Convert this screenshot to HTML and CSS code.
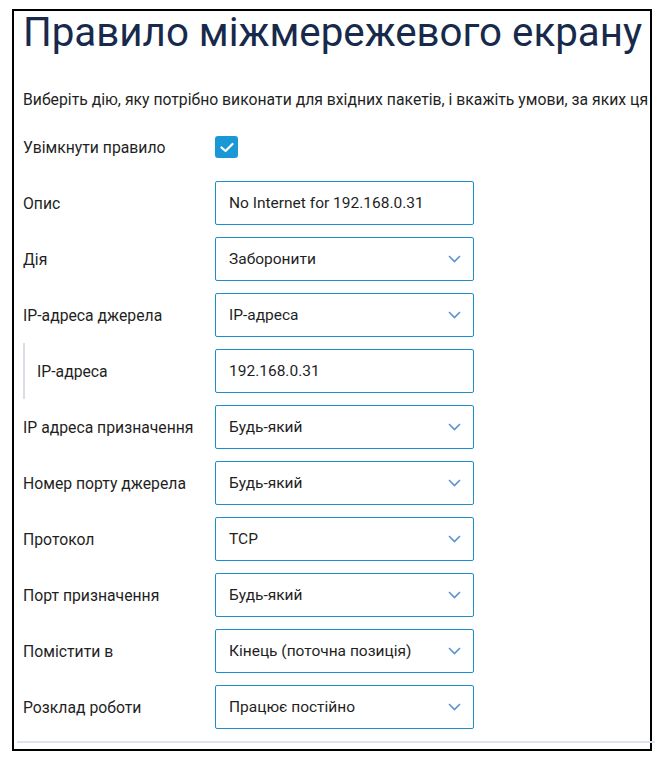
FILE: index.html
```html
<!DOCTYPE html>
<html lang="uk">
<head>
  <meta charset="UTF-8" />
  <title>Правило міжмережевого екрану</title>
  <link rel="stylesheet" href="styles.css">
</head>
<body>
  <div class="frame">
    <h1>Правило міжмережевого екрану</h1>
    <p class="intro">Виберіть дію, яку потрібно виконати для вхідних пакетів, і вкажіть умови, за яких ця</p>

    <div class="form">
      <div class="row">
        <label>Увімкнути правило</label>
        <span class="check">
          <svg width="14" height="11" viewBox="0 0 14 11"><polyline points="1.5,5.5 5.5,9 12.5,2" fill="none" stroke="#fff" stroke-width="2.2" stroke-linecap="round" stroke-linejoin="round"/></svg>
        </span>
      </div>
      <div class="row">
        <label>Опис</label>
        <div class="box">No Internet for 192.168.0.31</div>
      </div>
      <div class="row">
        <label>Дія</label>
        <div class="box select">Заборонити <svg class="chev" width="13" height="8" viewBox="0 0 13 8"><polyline points="1,1 6.5,6.5 12,1" fill="none" stroke="#5b94d4" stroke-width="1.6"/></svg></div>
      </div>
      <div class="row">
        <label>IP-адреса джерела</label>
        <div class="box select">IP-адреса <svg class="chev" width="13" height="8" viewBox="0 0 13 8"><polyline points="1,1 6.5,6.5 12,1" fill="none" stroke="#5b94d4" stroke-width="1.6"/></svg></div>
      </div>
      <div class="row sub">
        <label>IP-адреса</label>
        <div class="box">192.168.0.31</div>
      </div>
      <div class="row">
        <label>IP адреса призначення</label>
        <div class="box select">Будь-який <svg class="chev" width="13" height="8" viewBox="0 0 13 8"><polyline points="1,1 6.5,6.5 12,1" fill="none" stroke="#5b94d4" stroke-width="1.6"/></svg></div>
      </div>
      <div class="row">
        <label>Номер порту джерела</label>
        <div class="box select">Будь-який <svg class="chev" width="13" height="8" viewBox="0 0 13 8"><polyline points="1,1 6.5,6.5 12,1" fill="none" stroke="#5b94d4" stroke-width="1.6"/></svg></div>
      </div>
      <div class="row">
        <label>Протокол</label>
        <div class="box select">TCP <svg class="chev" width="13" height="8" viewBox="0 0 13 8"><polyline points="1,1 6.5,6.5 12,1" fill="none" stroke="#5b94d4" stroke-width="1.6"/></svg></div>
      </div>
      <div class="row">
        <label>Порт призначення</label>
        <div class="box select">Будь-який <svg class="chev" width="13" height="8" viewBox="0 0 13 8"><polyline points="1,1 6.5,6.5 12,1" fill="none" stroke="#5b94d4" stroke-width="1.6"/></svg></div>
      </div>
      <div class="row">
        <label>Помістити в</label>
        <div class="box select">Кінець (поточна позиція) <svg class="chev" width="13" height="8" viewBox="0 0 13 8"><polyline points="1,1 6.5,6.5 12,1" fill="none" stroke="#5b94d4" stroke-width="1.6"/></svg></div>
      </div>
      <div class="row">
        <label>Розклад роботи</label>
        <div class="box select">Працює постійно <svg class="chev" width="13" height="8" viewBox="0 0 13 8"><polyline points="1,1 6.5,6.5 12,1" fill="none" stroke="#5b94d4" stroke-width="1.6"/></svg></div>
      </div>
    </div>

    <div class="divider"></div>
  </div>
</body>
</html>
```

FILE: styles.css
```css
* { box-sizing: border-box; margin: 0; padding: 0; }

body {
  font-family: Roboto, 'Liberation Sans', sans-serif;
  background: #fff;
  color: #1f1f1f;
}

.frame {
  margin: 9px 0 0 12px;
  width: 640px;
  height: 742px;
  border: 2px solid #000;
  padding: 0 0 0 9px;
}

h1 {
  font-size: 40.3px;
  font-weight: 400;
  color: #172a4c;
  line-height: 43px;
  white-space: nowrap;
}

.intro {
  font-size: 15.75px;
  line-height: 20px;
  margin-top: 36px;
  white-space: nowrap;
  overflow: hidden;
}

.form {
  margin-top: 15px;
  display: flex;
  flex-direction: column;
  gap: 12px;
}

.row {
  display: flex;
  align-items: center;
  height: 44px;
}

.row label {
  width: 192px;
  font-size: 15.75px;
}

.row.sub {
  border-left: 2px solid #d9dde4;
  height: 56px;
  margin: -6px 0;
}

.row.sub label {
  width: 190px;
  padding-left: 12px;
}

.check {
  width: 23px;
  height: 22px;
  background: #1a98d5;
  border-radius: 3px;
  display: flex;
  align-items: center;
  justify-content: center;
}

.box {
  width: 259px;
  height: 44px;
  border: 1px solid #1a8fd0;
  border-radius: 2px;
  padding: 0 13px;
  font-size: 15.5px;
  display: flex;
  align-items: center;
  justify-content: space-between;
}

.chev {
  margin-right: -1px;
}

.divider {
  margin: 12px 0 0 -6px;
  width: 638px;
  height: 2px;
  background: #dde4ef;
}
```
